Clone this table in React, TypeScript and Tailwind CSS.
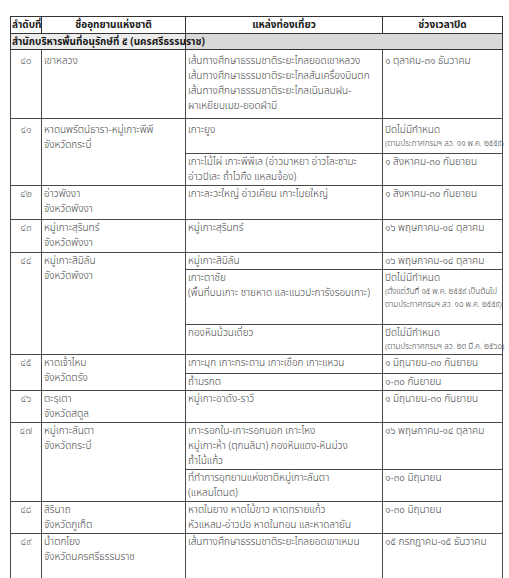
import React from "react";

type Line = string | { t: string; small?: boolean };

const font = { fontFamily: '"Noto Sans Thai", "Noto Sans", "DejaVu Sans", sans-serif' };

const Cell = ({
  lines,
  rowSpan,
  className = "pt-[1px]",
}: {
  lines: Line[];
  rowSpan?: number;
  className?: string;
}) => (
  <td
    rowSpan={rowSpan}
    className={`border border-[#4a4a4a] align-top px-[2px] text-[10px] leading-[15px] font-light text-[#454545] ${className}`}
  >
    {lines.map((l, i) =>
      typeof l === "string" ? (
        <div key={i} className="whitespace-nowrap">
          {l}
        </div>
      ) : (
        <div key={i} className="whitespace-nowrap text-[8px] leading-[12.5px]">
          {l.t}
        </div>
      )
    )}
  </td>
);

const Num = ({ n, rowSpan, pt = "pt-[1px]" }: { n: string; rowSpan?: number; pt?: string }) => (
  <td
    rowSpan={rowSpan}
    className={`border border-[#4a4a4a] align-top text-center text-[10px] leading-[15px] font-light text-[#5a5a5a] ${pt}`}
  >
    {n}
  </td>
);

export default function App() {
  return (
    <div className="w-[509px] h-[578px] bg-white pt-[16px] pl-[10px]" style={font}>
      <table className="border-collapse table-fixed w-[492px] border border-[#333]">
        <colgroup>
          <col className="w-[31px]" />
          <col className="w-[144px]" />
          <col className="w-[197px]" />
          <col className="w-[120px]" />
        </colgroup>
        <tbody>
          <tr className="h-[17px]">
            {["ลำดับที่", "ชื่ออุทยานแห่งชาติ", "แหล่งท่องเที่ยว", "ช่วงเวลาปิด"].map((h, i) => (
              <th
                key={h}
                className={`border border-[#333] font-bold text-[10px] leading-[14px] text-[#1a1a1a] ${
                  i === 0 ? "text-left px-[1px] whitespace-nowrap" : "text-center"
                }`}
              >
                {h}
              </th>
            ))}
          </tr>
          <tr className="h-[16px]">
            <td
              colSpan={2}
              className="border border-[#333] bg-[#ececec] px-[1px] font-bold text-[10px] leading-[14px] text-[#1a1a1a] whitespace-nowrap"
            >
              สำนักบริหารพื้นที่อนุรักษ์ที่ ๕ (นครศรีธรรมราช)
            </td>
            <td colSpan={2} className="border border-[#333] bg-[#d9d9d9]" />
          </tr>

          <tr className="h-[69px]">
            <Num n="๔๐" pt="pt-[4px]" />
            <Cell className="pt-[4px]" lines={["เขาหลวง"]} />
            <Cell
              className="pt-[4px]"
              lines={[
                "เส้นทางศึกษาธรรมชาติระยะไกลยอดเขาหลวง",
                "เส้นทางศึกษาธรรมชาติระยะไกลสันเครื่องบินตก",
                "เส้นทางศึกษาธรรมชาติระยะไกลเนินลมฝน-",
                "ผาเหยียบเมฆ-ยอดฝ่ามี",
              ]}
            />
            <Cell className="pt-[4px]" lines={["๑ ตุลาคม-๓๑ ธันวาคม"]} />
          </tr>

          <tr className="h-[35px]">
            <Num n="๔๑" rowSpan={2} pt="pt-[4px]" />
            <Cell className="pt-[4px]" rowSpan={2} lines={["หาดนพรัตน์ธารา-หมู่เกาะพีพี", "จังหวัดกระบี่"]} />
            <Cell className="pt-[4px]" lines={["เกาะยูง"]} />
            <Cell className="pt-[4px]" lines={["ปิดไม่มีกำหนด", { t: "(ตามประกาศกรมฯ ลว. ๑๑ พ.ค. ๒๕๕๙)" }]} />
          </tr>
          <tr className="h-[32px]">
            <Cell lines={["เกาะไม้ไผ่ เกาะพีพีเล (อ่าวมาหยา อ่าวโละซามะ", "อ่าวปิเละ ถ้ำไวกิ้ง แหลมจ้อง)"]} />
            <Cell lines={["๑ สิงหาคม-๓๐ กันยายน"]} />
          </tr>

          <tr className="h-[34px]">
            <Num n="๔๒" />
            <Cell lines={["อ่าวพังงา", "จังหวัดพังงา"]} />
            <Cell lines={["เกาะละวะใหญ่ อ่าวเคียน เกาะโบยใหญ่"]} />
            <Cell lines={["๑ สิงหาคม-๓๐ กันยายน"]} />
          </tr>

          <tr className="h-[33px]">
            <Num n="๔๓" />
            <Cell lines={["หมู่เกาะสุรินทร์", "จังหวัดพังงา"]} />
            <Cell lines={["หมู่เกาะสุรินทร์"]} />
            <Cell lines={["๑๖ พฤษภาคม-๑๔ ตุลาคม"]} />
          </tr>

          <tr className="h-[16px]">
            <Num n="๔๔" rowSpan={3} />
            <Cell rowSpan={3} lines={["หมู่เกาะสิมิลัน", "จังหวัดพังงา"]} />
            <Cell lines={["หมู่เกาะสิมิลัน"]} />
            <Cell lines={["๑๖ พฤษภาคม-๑๔ ตุลาคม"]} />
          </tr>
          <tr className="h-[55px]">
            <Cell lines={["เกาะตาชัย", "(พื้นที่บนเกาะ ชายหาด และแนวปะการังรอบเกาะ)"]} />
            <Cell
              lines={[
                "ปิดไม่มีกำหนด",
                { t: "(ตั้งแต่วันที่ ๑๕ พ.ค. ๒๕๕๙ เป็นต้นไป" },
                { t: "ตามประกาศกรมฯ ลว. ๑๐ พ.ค. ๒๕๕๙)" },
              ]}
            />
          </tr>
          <tr className="h-[28px]">
            <Cell lines={["กองหินม้วนเดี๋ยว"]} />
            <Cell lines={["ปิดไม่มีกำหนด", { t: "(ตามประกาศกรมฯ ลว. ๒๓ มี.ค. ๒๕๖๐)" }]} />
          </tr>

          <tr className="h-[19px]">
            <Num n="๔๕" rowSpan={2} />
            <Cell rowSpan={2} lines={["หาดเจ้าไหม", "จังหวัดตรัง"]} />
            <Cell lines={["เกาะมุก เกาะกระดาน เกาะเชือก เกาะแหวน"]} />
            <Cell lines={["๑ มิถุนายน-๓๐ กันยายน"]} />
          </tr>
          <tr className="h-[17px]">
            <Cell lines={["ถ้ำมรกต"]} />
            <Cell lines={["๑-๓๐ กันยายน"]} />
          </tr>

          <tr className="h-[31px]">
            <Num n="๔๖" />
            <Cell lines={["ตะรุเตา", "จังหวัดสตูล"]} />
            <Cell lines={["หมู่เกาะอาดัง-ราวี"]} />
            <Cell lines={["๑ มิถุนายน-๓๐ กันยายน"]} />
          </tr>

          <tr className="h-[47px]">
            <Num n="๔๗" rowSpan={2} />
            <Cell rowSpan={2} lines={["หมู่เกาะลันตา", "จังหวัดกระบี่"]} />
            <Cell
              lines={[
                "เกาะรอกใน-เกาะรอกนอก เกาะไหง",
                "หมู่เกาะห้า (ตุกนลิมา) กองหินแดง-หินม่วง",
                "ถ้ำไม้แก้ว",
              ]}
            />
            <Cell lines={["๑๖ พฤษภาคม-๑๔ ตุลาคม"]} />
          </tr>
          <tr className="h-[30px]">
            <Cell lines={["ที่ทำการอุทยานแห่งชาติหมู่เกาะลันตา", "(แหลมโตนด)"]} />
            <Cell lines={["๑-๓๐ มิถุนายน"]} />
          </tr>

          <tr className="h-[32px]">
            <Num n="๔๘" />
            <Cell lines={["สิรินาถ", "จังหวัดภูเก็ต"]} />
            <Cell lines={["หาดในยาง หาดไม้ขาว หาดทรายแก้ว", "หัวแหลม-อ่าวปอ หาดในทอน และหาดลายัน"]} />
            <Cell lines={["๑-๓๐ มิถุนายน"]} />
          </tr>

          <tr className="h-[45px]">
            <Num n="๔๙" />
            <Cell lines={["น้ำตกโยง", "จังหวัดนครศรีธรรมราช"]} />
            <Cell lines={["เส้นทางศึกษาธรรมชาติระยะไกลยอดเขาเหมน"]} />
            <Cell lines={["๑๕ กรกฎาคม-๑๕ ธันวาคม"]} />
          </tr>
        </tbody>
      </table>
    </div>
  );
}
